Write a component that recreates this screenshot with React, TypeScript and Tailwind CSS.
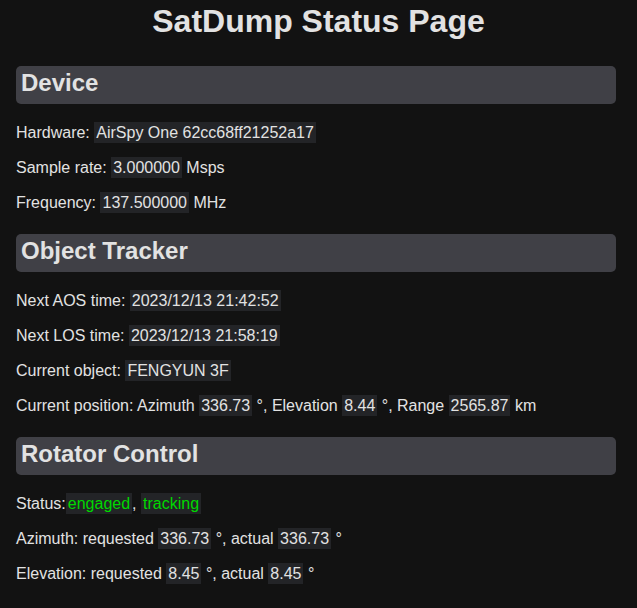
type Row = { label: string; parts: (string | { code: string; green?: boolean })[] }

const SECTIONS: { title: string; rows: Row[] }[] = [
  {
    title: 'Device',
    rows: [
      { label: 'Hardware: ', parts: [{ code: 'AirSpy One 62cc68ff21252a17' }] },
      { label: 'Sample rate: ', parts: [{ code: '3.000000' }, ' Msps'] },
      { label: 'Frequency: ', parts: [{ code: '137.500000' }, ' MHz'] },
    ],
  },
  {
    title: 'Object Tracker',
    rows: [
      { label: 'Next AOS time: ', parts: [{ code: '2023/12/13 21:42:52' }] },
      { label: 'Next LOS time: ', parts: [{ code: '2023/12/13 21:58:19' }] },
      { label: 'Current object: ', parts: [{ code: 'FENGYUN 3F' }] },
      {
        label: 'Current position: Azimuth ',
        parts: [{ code: '336.73' }, ' °, Elevation ', { code: '8.44' }, ' °, Range ', { code: '2565.87' }, ' km'],
      },
    ],
  },
  {
    title: 'Rotator Control',
    rows: [
      { label: 'Status:', parts: [{ code: 'engaged', green: true }, ', ', { code: 'tracking', green: true }] },
      { label: 'Azimuth: requested ', parts: [{ code: '336.73' }, ' °, actual ', { code: '336.73' }, ' °'] },
      { label: 'Elevation: requested ', parts: [{ code: '8.45' }, ' °, actual ', { code: '8.45' }, ' °'] },
    ],
  },
]

function Code({ children, green }: { children: string; green?: boolean }) {
  return (
    <span className={`bg-[#232427] px-[2px] py-[2px] ${green ? 'text-[#00d800]' : 'text-[#e2e2e2]'}`}>
      {children}
    </span>
  )
}

export default function App() {
  return (
    <div className="min-h-screen bg-[#121212] text-[#e2e2e2] px-4 pb-6 font-['Liberation_Sans',Arial,sans-serif]">
      <h1 className="pt-[3px] text-center text-[32px] font-bold leading-[37px]">SatDump Status Page</h1>

      {SECTIONS.map((s, i) => (
        <div key={s.title} className={i === 0 ? 'mt-[26px]' : 'mt-[22px]'}>
          <h2 className="w-[600px] rounded-[5px] bg-[#404046] px-[5px] pt-[3px] pb-[7px] text-[24px] font-bold leading-[28px]">
            {s.title}
          </h2>
          <div className="mt-[19px] flex flex-col gap-4">
            {s.rows.map((r) => (
              <p key={r.label} className="whitespace-pre text-[16px] leading-[19px]">
                {r.label}
                {r.parts.map((p, j) =>
                  typeof p === 'string' ? (
                    <span key={j}>{p}</span>
                  ) : (
                    <Code key={j} green={p.green}>{p.code}</Code>
                  ),
                )}
              </p>
            ))}
          </div>
        </div>
      ))}
    </div>
  )
}
